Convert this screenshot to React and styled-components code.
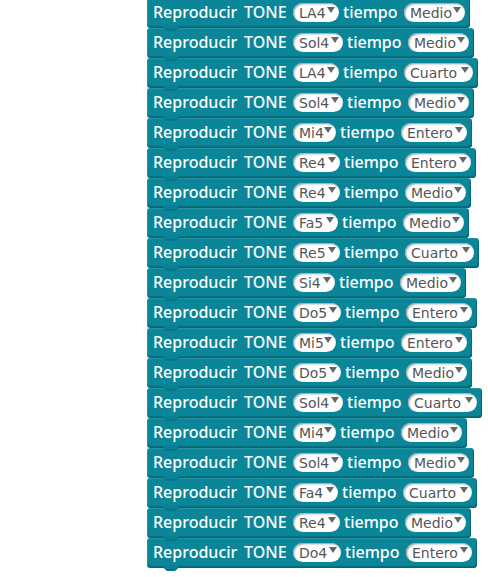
import React from "react";
import styled, { createGlobalStyle } from "styled-components";

const GlobalStyle = createGlobalStyle`
  *, *::before, *::after { box-sizing: border-box; }
  body { margin: 0; background: #fff; }
`;

const NOTES = {
  LA4: 46, Sol4: 50, Mi4: 43, Re4: 47, Fa4: 45, Fa5: 45,
  Re5: 47, Si4: 42, Do4: 48, Do5: 48, Mi5: 43,
};
const BEATS = { Medio: 61, Cuarto: 69, Entero: 66 };

const MELODY = [
  ["LA4", "Medio"], ["Sol4", "Medio"], ["LA4", "Cuarto"], ["Sol4", "Medio"],
  ["Mi4", "Entero"], ["Re4", "Entero"], ["Re4", "Medio"], ["Fa5", "Medio"],
  ["Re5", "Cuarto"], ["Si4", "Medio"], ["Do5", "Entero"], ["Mi5", "Entero"],
  ["Do5", "Medio"], ["Sol4", "Cuarto"], ["Mi4", "Medio"], ["Sol4", "Medio"],
  ["Fa4", "Cuarto"], ["Re4", "Medio"], ["Do4", "Entero"],
];

const Workspace = styled.main`
  min-height: 100vh;
  padding-left: 147px;
  overflow: hidden;
`;

const Script = styled.div`
  display: flex;
  flex-direction: column;
  align-items: flex-start;
  margin-top: -2px;
`;

const Block = styled.div`
  position: relative;
  display: flex;
  align-items: center;
  height: 30px;
  padding: 0 5px 1px 6px;
  border-radius: 4px;
  background: #0b8699;
  box-shadow: inset 0 1px 1px #2794a4, inset 1px 0 0 #2591a2,
    inset -1px -1px 1px #076473, inset 0 -2px 1px #08707f;
  white-space: nowrap;
`;

const Label = styled.span`
  color: #fff;
  font: 500 16px/19px "Noto Sans", "Open Sans", sans-serif;
`;

const Action = styled(Label)`
  width: 140px;
`;

const Verb = styled(Label)`
  display: inline-block;
  width: 91px;
`;

const Time = styled(Label)`
  width: 65px;
  padding-left: 4px;
`;

const Picker = styled.span`
  position: relative;
  display: flex;
  width: ${(p) => p.$width}px;
  height: 19px;
`;

const Select = styled.select`
  appearance: none;
  width: 100%;
  height: 19px;
  margin: 0;
  padding: 2px 0 0 6px;
  border: 0;
  border-radius: 10px;
  background: #fff;
  box-shadow: inset 1px 1px 2px #7f9ba0;
  color: #555;
  font: 14px/17px "DejaVu Sans", sans-serif;
`;

const Arrow = styled.svg`
  position: absolute;
  top: 4px;
  right: 4px;
  pointer-events: none;
`;

const Tab = styled.svg`
  position: absolute;
  z-index: 1;
  top: 28px;
  left: 15px;
`;

function Dropdown({ label, options, value }) {
  return (
    <Picker $width={options[value]}>
      <Select aria-label={label} defaultValue={value}>
        {Object.keys(options).map((o) => <option key={o}>{o}</option>)}
      </Select>
      <Arrow width="8" height="6" aria-hidden="true">
        <path d="M0 0H8L4 6Z" fill="#666" />
      </Arrow>
    </Picker>
  );
}

function ToneBlock({ note, beat }) {
  return (
    <Block>
      <Action><Verb>Reproducir</Verb>TONE</Action>
      <Dropdown label="Nota" options={NOTES} value={note} />
      <Time>tiempo</Time>
      <Dropdown label="Tiempo" options={BEATS} value={beat} />
      <Tab width="18" height="5" aria-hidden="true">
        <path d="M0 0H18L13 5H5Z" fill="#0b8094" />
        <path d="M1 1L5 4H13L17 1" fill="none" stroke="#08697a" />
      </Tab>
    </Block>
  );
}

export default function App() {
  return (
    <>
      <GlobalStyle />
      <Workspace>
        <Script>
          {MELODY.map(([note, beat], i) => <ToneBlock key={i} note={note} beat={beat} />)}
        </Script>
      </Workspace>
    </>
  );
}
